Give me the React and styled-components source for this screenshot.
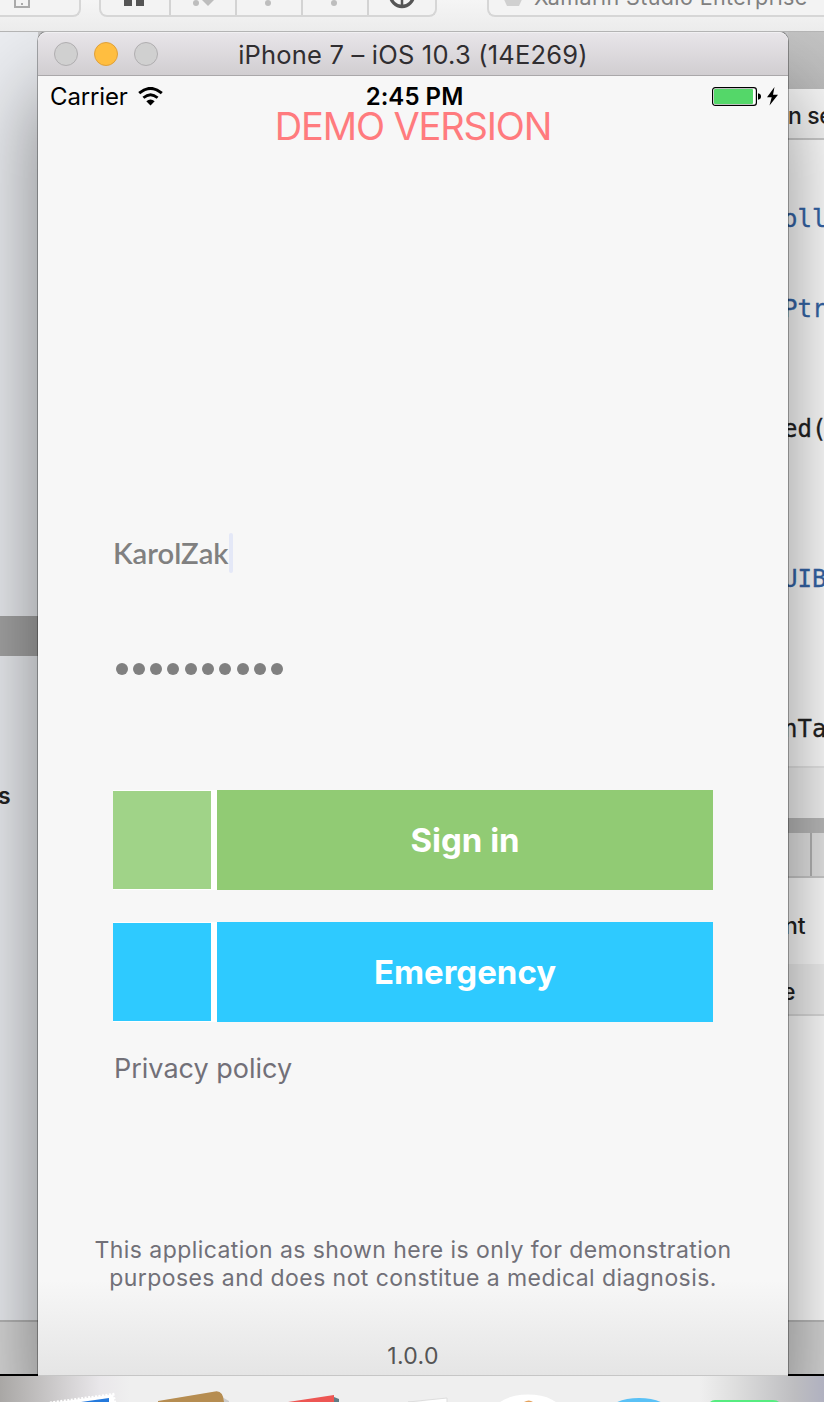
import React from "react";
import styled, { createGlobalStyle } from "styled-components";

const Global = createGlobalStyle`
  *, *::before, *::after { box-sizing: border-box; }
  body { margin: 0; font-family: Inter, "Liberation Sans", sans-serif; }
`;

const Desktop = styled.div`
  width: 824px;
  height: 1402px;
  display: flex;
  flex-direction: column;
  overflow: hidden;
  background: #fff;
`;

const Toolbar = styled.header`
  flex: 0 0 32px;
  display: flex;
  align-items: flex-start;
  overflow: hidden;
  background: linear-gradient(#f5f5f5, #ececec);
  border-bottom: 1px solid #b4b4b4;
`;

const ToolGroup = styled.div`
  flex: 0 0 ${(p) => p.$w}px;
  height: 17px;
  display: flex;
  margin-left: ${(p) => p.$ml || 0}px;
  border: solid #d6d6d6;
  border-width: 0 ${(p) => (p.$openRight ? 0 : 2)}px 2px ${(p) => (p.$openLeft ? 0 : 2)}px;
  border-radius: 0 0 ${(p) => (p.$openRight ? 0 : 8)}px ${(p) => (p.$openLeft ? 0 : 8)}px;
  background: #f3f3f3;
`;

const Tool = styled.div`
  flex: 0 0 66px;
  display: flex;
  justify-content: center;
  &:first-child { flex-basis: 68px; }
  & + & { border-left: 2px solid #d3d3d3; }
`;

const StatusText = styled.span`
  margin-left: 7px;
  font-size: 21.5px;
  line-height: 26px;
  letter-spacing: 0.4px;
  margin-top: -16px;
  color: #808080;
  white-space: nowrap;
`;

const Workspace = styled.div`
  flex: 0 0 1344px;
  display: flex;
  overflow: hidden;
  background: #c9c9cb;
`;

const Pane = styled.aside`
  flex: 0 0 ${(p) => p.$w}px;
  display: flex;
  flex-direction: column;
  overflow: hidden;
  background: ${(p) => p.$bg};
`;

const Band = styled.div`
  flex: 0 0 ${(p) => p.$h}px;
  display: flex;
  align-items: center;
  overflow: hidden;
  padding-top: ${(p) => p.$pt || 0}px;
  background: ${(p) => p.$bg || "transparent"};
  border-bottom: ${(p) => (p.$line ? `2px solid ${p.$line}` : "0")};
`;

const Tab = styled.div`
  width: 24px;
  height: 100%;
  border-right: 2px solid #b5b5b5;
`;

const Label = styled.span`
  font-size: 23px;
  font-weight: ${(p) => p.$weight || 500};
  letter-spacing: ${(p) => p.$ls || 0}px;
  color: #222;
  margin-left: ${(p) => p.$ml || 0}px;
  white-space: nowrap;
`;

const Code = styled.span`
  font-family: "DejaVu Sans Mono", monospace;
  font-size: 24px;
  color: ${(p) => (p.$blue ? "#3465a8" : "#222")};
  -webkit-text-stroke: 0.3px currentColor;
  margin-left: ${(p) => p.$ml}px;
  white-space: nowrap;
`;

const Simulator = styled.main`
  flex: 0 0 750px;
  position: relative;
  z-index: 1;
  display: flex;
  flex-direction: column;
  border-radius: 9px 9px 0 0;
  border-bottom: 1px solid #c6c6c6;
  background: linear-gradient(#f7f7f7 0 1248px, #e5e5e5 1343px);
  box-shadow: 0 0 0 1px rgba(0, 0, 0, 0.3), 0 58px 88px rgba(0, 0, 0, 0.47);
`;

const TitleBar = styled.div`
  flex: 0 0 44px;
  display: grid;
  grid-template-columns: 150px 1fr 150px;
  align-items: center;
  border-radius: 9px 9px 0 0;
  border-top: 1px solid #f1f0f2;
  border-bottom: 1px solid #aaa8aa;
  background: linear-gradient(#e8e5e9, #d1ced1);
`;

const Lights = styled.div`
  display: flex;
  gap: 16px;
  padding: 0 0 0 16px;
`;

const Light = styled.i`
  width: 24px;
  height: 24px;
  border-radius: 50%;
  background: ${(p) => (p.$on ? "#ffbe40" : "#d0d0d0")};
  border: 1px solid ${(p) => (p.$on ? "#dfa03a" : "#b0aeb0")};
`;

const Title = styled.h1`
  margin: 0;
  padding-top: 1px;
  font-size: 25.5px;
  font-weight: 400;
  line-height: 40px;
  letter-spacing: 0.2px;
  text-align: center;
  color: #302e31;
  white-space: nowrap;
`;

const StatusBar = styled.div`
  flex: 0 0 40px;
  display: grid;
  grid-template-columns: 1fr auto 1fr;
  align-items: center;
  padding: 0 9px 0 12px;
  font-size: 24px;
  color: #000;
`;

const Carrier = styled.div`
  display: flex;
  align-items: center;
  gap: 10px;
  letter-spacing: -0.15px;
`;

const Clock = styled.div`
  font-weight: 600;
  letter-spacing: 0.05px;
`;

const Power = styled.div`
  display: flex;
  justify-content: flex-end;
`;

const Demo = styled.div`
  height: 40px;
  margin-top: -10px;
  font-size: 38px;
  line-height: 40px;
  letter-spacing: -1.15px;
  text-align: center;
  color: #ff7b7e;
`;

const Form = styled.div`
  display: flex;
  flex-direction: column;
  width: 600px;
  margin: 385px 0 0 75px;
`;

const UserField = styled.div`
  height: 43px;
  display: flex;
  align-items: center;
  font-family: Lato, sans-serif;
  font-weight: 600;
  font-size: 29.2px;
  color: #808080;
`;

const Caret = styled.i`
  width: 4px;
  height: 40px;
  border-radius: 2px;
  background: #e4e8f7;
`;

const Password = styled.div`
  display: flex;
  gap: 5.3px;
  padding-left: 2.5px;
  margin: 89px 0 115px;
`;

const Dot = styled.i`
  width: 12px;
  height: 12px;
  border-radius: 50%;
  background: #808080;
`;

const Action = styled.button`
  height: 100px;
  padding: 0;
  margin: 0 0 32px;
  border: 0;
  display: grid;
  grid-template-columns: 98px 496px;
  gap: 6px;
  align-items: center;
  background: #fff;
  font-family: inherit;
`;

const Swatch = styled.span`
  height: 98px;
  background: ${(p) => p.$c};
`;

const ActionLabel = styled.span`
  height: 100px;
  line-height: 100px;
  background: ${(p) => p.$c};
  color: #fff;
  font-size: 33px;
  font-weight: 700;
  letter-spacing: ${(p) => p.$ls}px;
`;

const Privacy = styled.a`
  font-size: 27px;
  line-height: 34px;
  margin: -2px 0 0 1px;
  color: #727078;
`;

const Notice = styled.p`
  margin: 150px 0 0;
  font-size: 23px;
  line-height: 28px;
  letter-spacing: 0.43px;
  text-align: center;
  color: #717078;
`;

const Version = styled.div`
  margin-top: 49px;
  font-size: 23px;
  line-height: 30px;
  letter-spacing: 0.3px;
  text-align: center;
  color: #555;
`;

const Dock = styled.footer`
  flex: 0 0 26px;
  display: flex;
  position: relative;
  z-index: 2;
  background: linear-gradient(90deg, #a9a7a5, #e9e7ea 100px, #efefef 130px 700px, #dedede 735px, #bdbdc0 795px, #b0b1c0);
`;

const glyph = "#bdbdbd";

export default function App() {
  return (
    <Desktop>
      <Global />
      <Toolbar>
        <ToolGroup $w={81} $openLeft>
          <svg width="40" height="15"><path d="M15 0V7H29V0" fill="none" stroke="#aaa" strokeWidth="2" /><path d="M21 4h2" stroke="#aaa" strokeWidth="2" /></svg>
        </ToolGroup>
        <ToolGroup $w={338} $ml={18}>
          <Tool><svg width="24" height="15"><path d="M1 0h8v6H1zM13 0h8v6h-8z" fill="#555" /></svg></Tool>
          <Tool><svg width="24" height="15"><circle cx="5" cy="3" r="3" fill={glyph} /><path d="M11 0h12l-6 6z" fill={glyph} /></svg></Tool>
          <Tool><svg width="10" height="15"><circle cx="4" cy="3" r="3" fill={glyph} /></svg></Tool>
          <Tool><svg width="10" height="15"><circle cx="4" cy="3" r="3" fill={glyph} /></svg></Tool>
          <Tool><svg width="28" height="15"><circle cx="15" cy="-5" r="11.5" fill="none" stroke="#555" strokeWidth="3.4" /><path d="M15-2v8" stroke="#555" strokeWidth="2.5" /></svg></Tool>
        </ToolGroup>
        <ToolGroup $w={337} $ml={50} $openRight>
          <svg width="38" height="15"><path d="M13-5h22l-5 11H18z" fill="#d0d0d0" /></svg>
          <StatusText>Xamarin Studio Enterprise</StatusText>
        </ToolGroup>
      </Toolbar>
      <Workspace>
        <Pane $w={38} $bg="#ebedf1">
          <Band $h={584} />
          <Band $h={40} $bg="#a4a4a4" />
          <Band $h={120} />
          <Band $h={40}><Label $weight={600} $ml={-2}>s</Label></Band>
          <Band $h={506} $line="#b5b5b5" />
          <Band $h={54} $bg="#d6d6d6" $line="#000" />
        </Pane>
        <Simulator>
          <TitleBar>
            <Lights><Light /><Light $on /><Light /></Lights>
            <Title>iPhone 7 – iOS 10.3 (14E269)</Title>
          </TitleBar>
          <StatusBar>
            <Carrier>
              Carrier
              <svg width="25" height="19" viewBox="0 0 25 19">
                <path d="M1.2 6.2Q12.5-3.4 23.8 6.2" fill="none" stroke="#000" strokeWidth="3" />
                <path d="M5.4 10.8Q12.5 4.6 19.6 10.8" fill="none" stroke="#000" strokeWidth="2.8" />
                <path d="M8.3 14.2Q12.5 10.6 16.7 14.2L12.5 18.4z" fill="#000" />
              </svg>
            </Carrier>
            <Clock>2:45 PM</Clock>
            <Power>
              <svg width="68" height="20" viewBox="0 0 68 20">
                <rect x="1.6" y="1.6" width="43.8" height="17.8" rx="2.6" fill="#fff" stroke="#000" strokeWidth="1.2" />
                <rect x="3" y="3" width="39" height="15" rx="1" fill="#54d769" />
                <path d="M47 7.2q3 .6 3 3.3t-3 3.3z" fill="#000" />
                <path d="M63.5 1L56 11.3h4.7L58.5 19.5 67 8.7h-5z" fill="#000" />
              </svg>
            </Power>
          </StatusBar>
          <Demo>DEMO VERSION</Demo>
          <Form>
            <UserField>KarolZak<Caret /></UserField>
            <Password>{Array.from({ length: 10 }, (_, i) => <Dot key={i} />)}</Password>
            <Action><Swatch $c="#a0d388" /><ActionLabel $c="#91cb74" $ls={0}>Sign in</ActionLabel></Action>
            <Action><Swatch $c="#2ecaff" /><ActionLabel $c="#2ecaff" $ls={0}>Emergency</ActionLabel></Action>
            <Privacy>Privacy policy</Privacy>
          </Form>
          <Notice>This application as shown here is only for demonstration<br />purposes and does not constitue a medical diagnosis.</Notice>
          <Version>1.0.0</Version>
        </Simulator>
        <Pane $w={36} $bg="#fff">
          <Band $h={57} $bg="linear-gradient(#c4c4c4, #bcbcbc)" />
          <Band $h={51} $pt={5} $bg="#f8f8f8" $line="#ccc"><Label $ls={-0.4}>n se</Label></Band>
          <Band $h={58} />
          <Band $h={40} $pt={1}><Code $blue $ml={-5}>oll</Code></Band>
          <Band $h={50} />
          <Band $h={40} $pt={1}><Code $blue $ml={-5}>Ptr</Code></Band>
          <Band $h={80} />
          <Band $h={40} $pt={1}><Code $ml={-5}>ed(</Code></Band>
          <Band $h={110} />
          <Band $h={40} $pt={1}><Code $blue $ml={-5}>UIB</Code></Band>
          <Band $h={110} />
          <Band $h={40} $pt={1}><Code $ml={-5}>nTa</Code></Band>
          <Band $h={20} $line="#e8e8e8" />
          <Band $h={50} $bg="#f5f5f5" />
          <Band $h={15} $bg="#bbb" />
          <Band $h={45} $bg="#e7e7e7" $line="#ccc"><Tab /></Band>
          <Band $h={86} $pt={10}><Label $ml={-4}>nt</Label></Band>
          <Band $h={52} $pt={6} $bg="#f3f3f3" $line="#ddd"><Label $ml={-6}>e</Label></Band>
          <Band $h={306} $line="#bbb" />
          <Band $h={54} $bg="#d6d6d6" $line="#000" />
        </Pane>
      </Workspace>
      <Dock>
        <svg width="824" height="26" viewBox="0 1376 824 26">
          <path d="M50 1403L113 1394.5l2 9z" fill="#fff" stroke="#fff" strokeWidth="3" strokeDasharray="2 1.5" />
          <path d="M67 1404L109 1398v6z" fill="#2479dc" />
          <path d="M222 1397l7 4v2h-7z" fill="#ccc" />
          <path d="M158 1401L215 1391.5Q223 1390 224 1402H158z" fill="#b68d51" />
          <path d="M334 1397l5 2v5h-5z" fill="#617c85" />
          <path d="M288 1402L334 1395v8z" fill="#ed5653" />
          <path d="M408 1402L447 1398v5z" fill="#fff" stroke="#ddd" />
          <ellipse cx="528" cy="1412" rx="34" ry="17.5" fill="#fff" />
          <path d="M524 1402q5-3 9 0z" fill="#e4a15c" />
          <ellipse cx="639" cy="1412" rx="31" ry="14" fill="#5ac1f6" />
          <path d="M710 1402q2-2 5-2h58q4 0 6 2z" fill="#56ec80" />
        </svg>
      </Dock>
    </Desktop>
  );
}
